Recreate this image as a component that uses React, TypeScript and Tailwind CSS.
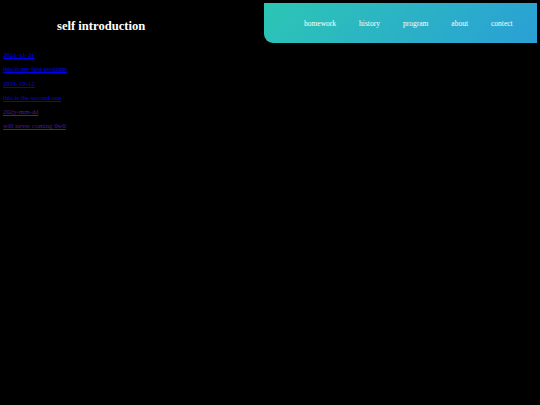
const links = [
  { text: '2021-11-21', visited: false },
  { text: 'this is my first program', visited: false },
  { text: '2021-12-12', visited: false },
  { text: 'this is the second one', visited: false },
  { text: '202y-mm-dd', visited: true },
  { text: 'will never coming 0w0', visited: true },
];

const navItems = ['homework', 'history', 'program', 'about', 'contect'];

export default function App() {
  return (
    <div className="h-[405px] w-[540px] overflow-hidden bg-black font-['Liberation_Serif',serif]">
      <div className="flex items-start">
        <div className="w-[264px] pl-[3px]">
          <h1 className="pt-[18px] pl-[54px] text-[12.6px] leading-[16px] font-bold text-white">self introduction</h1>
          <ul className="mt-[17px] flex flex-col gap-[7px]">
            {links.map((l) => (
              <li key={l.text} className="h-[7.25px] text-[6.8px] leading-[8px]">
                <a href="#" className={l.visited ? 'text-[#551a8b] underline' : 'text-[#0000ee] underline'}>
                  {l.text}
                </a>
              </li>
            ))}
          </ul>
        </div>
        <nav className="mt-[3px] flex h-[39.5px] w-[273px] items-center gap-[23px] rounded-bl-[9px] bg-[linear-gradient(135deg,#2cc6b4,#2a9fd6)] pt-[2px] pl-[40px] text-[7.5px] text-white">
          {navItems.map((n) => (
            <a key={n}>{n}</a>
          ))}
        </nav>
      </div>
    </div>
  );
}
